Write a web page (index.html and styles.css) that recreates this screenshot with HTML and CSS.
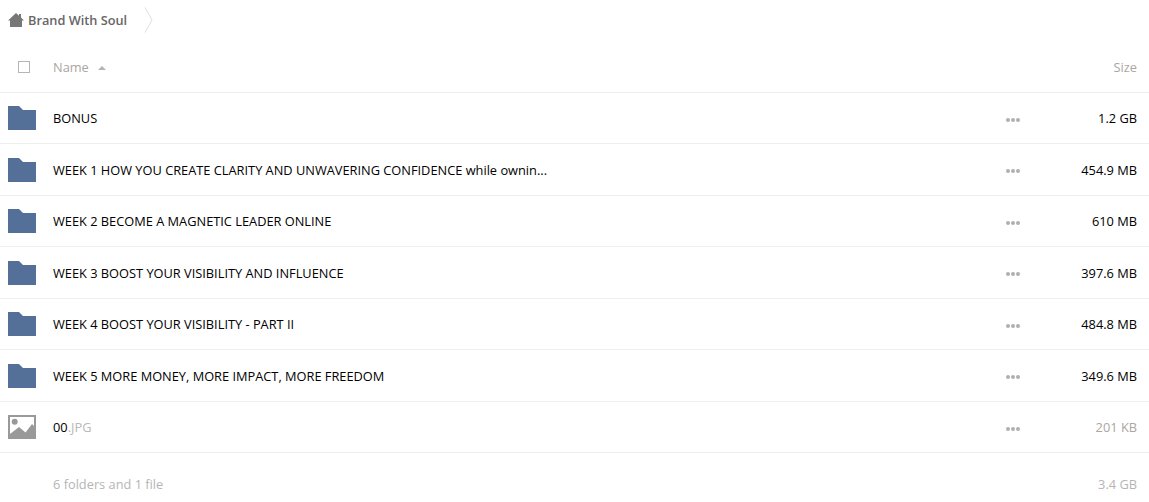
FILE: index.html
```html
<!DOCTYPE html>
<html lang="en">
<head>
  <meta charset="UTF-8">
  <title>Brand With Soul</title>
  <link rel="stylesheet" href="styles.css">
</head>
<body>

  <div class="crumbs">
    <svg class="home" width="16" height="14" viewBox="0 0 16 14"><path d="M8 0 L11 2.8 V1 H13 V4.6 L16 7.5 H14 V14 H2 V7.5 H0 Z" fill="#777"/></svg>
    <span class="crumb-name">Brand With Soul</span>
    <svg class="crumb-arrow" width="9" height="26" viewBox="0 0 9 26"><path d="M1 0.5 L8 13 L1 25.5" fill="none" stroke="#dedede"/></svg>
  </div>

  <div class="head">
    <span class="check"></span>
    <span class="name-col">Name <i class="sort"></i></span>
    <span class="size-col">Size</span>
  </div>

  <div class="row">
    <svg class="icon" width="28" height="24" viewBox="0 0 28 24"><path d="M0 0 H11 L15 4 H28 V24 H0 Z" fill="#547099"/></svg>
    <div class="title">BONUS</div>
    <div class="dots"><i></i><i></i><i></i></div>
    <div class="size">1.2 GB</div>
  </div>
  <div class="row">
    <svg class="icon" width="28" height="24" viewBox="0 0 28 24"><path d="M0 0 H11 L15 4 H28 V24 H0 Z" fill="#547099"/></svg>
    <div class="title">WEEK 1 HOW YOU CREATE CLARITY AND UNWAVERING CONFIDENCE while ownin...</div>
    <div class="dots"><i></i><i></i><i></i></div>
    <div class="size">454.9 MB</div>
  </div>
  <div class="row">
    <svg class="icon" width="28" height="24" viewBox="0 0 28 24"><path d="M0 0 H11 L15 4 H28 V24 H0 Z" fill="#547099"/></svg>
    <div class="title">WEEK 2 BECOME A MAGNETIC LEADER ONLINE</div>
    <div class="dots"><i></i><i></i><i></i></div>
    <div class="size">610 MB</div>
  </div>
  <div class="row">
    <svg class="icon" width="28" height="24" viewBox="0 0 28 24"><path d="M0 0 H11 L15 4 H28 V24 H0 Z" fill="#547099"/></svg>
    <div class="title">WEEK 3 BOOST YOUR VISIBILITY AND INFLUENCE</div>
    <div class="dots"><i></i><i></i><i></i></div>
    <div class="size">397.6 MB</div>
  </div>
  <div class="row">
    <svg class="icon" width="28" height="24" viewBox="0 0 28 24"><path d="M0 0 H11 L15 4 H28 V24 H0 Z" fill="#547099"/></svg>
    <div class="title">WEEK 4 BOOST YOUR VISIBILITY - PART II</div>
    <div class="dots"><i></i><i></i><i></i></div>
    <div class="size">484.8 MB</div>
  </div>
  <div class="row">
    <svg class="icon" width="28" height="24" viewBox="0 0 28 24"><path d="M0 0 H11 L15 4 H28 V24 H0 Z" fill="#547099"/></svg>
    <div class="title">WEEK 5 MORE MONEY, MORE IMPACT, MORE FREEDOM</div>
    <div class="dots"><i></i><i></i><i></i></div>
    <div class="size">349.6 MB</div>
  </div>
  <div class="row">
    <svg class="icon" width="28" height="24" viewBox="0 0 28 24"><path d="M0 0 H28 V24 H0 Z" fill="#999"/><path d="M2 2 H26 V11 L24 9 L17.5 17.5 L11 12 L2 19 Z" fill="#fff"/><circle cx="6.7" cy="6.7" r="3" fill="#999"/></svg>
    <div class="title">00<span class="ext">.JPG</span></div>
    <div class="dots"><i></i><i></i><i></i></div>
    <div class="size muted">201 KB</div>
  </div>

  <div class="summary">
    <span>6 folders and 1 file</span>
    <span>3.4 GB</span>
  </div>

</body>
</html>
```

FILE: styles.css
```css
body {
  margin: 0;
  background-color: #fff;
  font-family: 'Open Sans', sans-serif;
  font-size: 12.8px;
  color: #000;
  overflow: hidden;
}
.crumbs {
  display: flex;
  align-items: center;
  height: 40px;
  padding-left: 8px;
}
.home {
  margin-right: 4px;
}
.crumb-name {
  font-size: 12.75px;
  font-weight: 600;
  color: #666;
}
.crumb-arrow {
  margin-left: 17px;
}
.head {
  display: flex;
  align-items: center;
  height: 52.9px;
  padding: 2px 12px 0 18px;
  border-bottom: 1px solid #eee;
  color: #aaa6a2;
  box-sizing: border-box;
}
.check {
  width: 10px;
  height: 10px;
  border: 1px solid #b5b5b5;
  margin: 1px 23px 0 0;
}
.name-col {
  flex: 1;
}
.sort {
  display: inline-block;
  width: 0;
  height: 0;
  margin: 0 0 2px 6px;
  border-left: 4px solid transparent;
  border-right: 4px solid transparent;
  border-bottom: 4px solid #b5b5b5;
}
.row {
  display: flex;
  align-items: center;
  height: 51.5px;
  padding: 0 12px 0 8px;
  border-bottom: 1px solid #eee;
  box-sizing: border-box;
}
.icon {
  margin-right: 17px;
  flex: none;
}
.title {
  flex: 1;
}
.ext {
  color: #b8b8b8;
}
.dots {
  display: flex;
  gap: 1px;
  margin-top: 3px;
}
.dots i {
  width: 4px;
  height: 4px;
  border-radius: 50%;
  background-color: #b0b0b0;
}
.size {
  width: 117px;
  text-align: right;
}
.muted {
  color: #aaa6a2;
}
.summary {
  display: flex;
  justify-content: space-between;
  padding: 22px 12px 0 53px;
  color: #b5b5b5;
}
```
